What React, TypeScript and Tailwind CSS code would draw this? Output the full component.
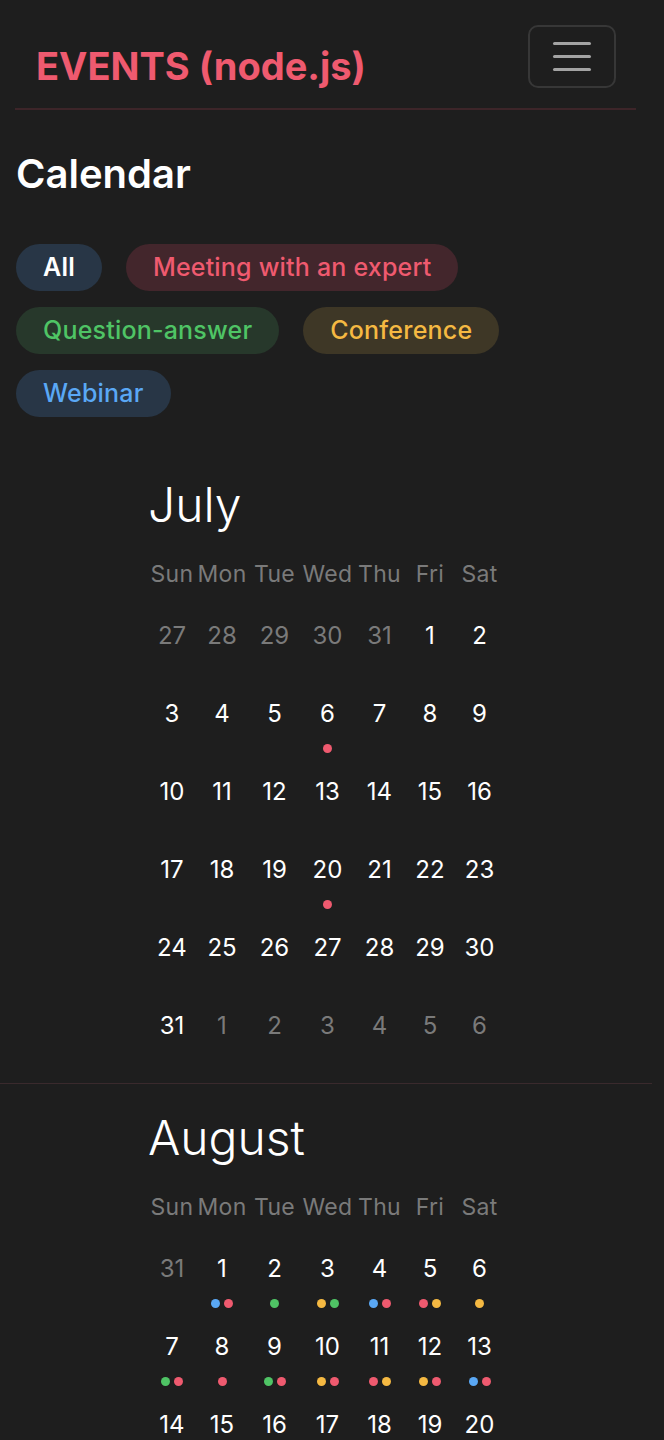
import React from "react";

type Dot = "r" | "g" | "y" | "b";
type Day = { n: number; muted?: boolean; dots?: Dot[] };

const dotColor: Record<Dot, string> = {
  r: "bg-[#ef5a6f]",
  g: "bg-[#4fc465]",
  y: "bg-[#f5b942]",
  b: "bg-[#5aa8f5]",
};

const weekdays = ["Sun", "Mon", "Tue", "Wed", "Thu", "Fri", "Sat"];

const filters = [
  { label: "All", cls: "bg-[#283646] text-white font-semibold" },
  { label: "Meeting with an expert", cls: "bg-[#43262c] text-[#ef5a6f]" },
  { label: "Question-answer", cls: "bg-[#27382b] text-[#4fc465]" },
  { label: "Conference", cls: "bg-[#3e3726] text-[#f5b942]" },
  { label: "Webinar", cls: "bg-[#283646] text-[#5aa8f5]" },
];

const july: Day[] = [
  { n: 27, muted: true }, { n: 28, muted: true }, { n: 29, muted: true }, { n: 30, muted: true }, { n: 31, muted: true }, { n: 1 }, { n: 2 },
  { n: 3 }, { n: 4 }, { n: 5 }, { n: 6, dots: ["r"] }, { n: 7 }, { n: 8 }, { n: 9 },
  { n: 10 }, { n: 11 }, { n: 12 }, { n: 13 }, { n: 14 }, { n: 15 }, { n: 16 },
  { n: 17 }, { n: 18 }, { n: 19 }, { n: 20, dots: ["r"] }, { n: 21 }, { n: 22 }, { n: 23 },
  { n: 24 }, { n: 25 }, { n: 26 }, { n: 27 }, { n: 28 }, { n: 29 }, { n: 30 },
  { n: 31 }, { n: 1, muted: true }, { n: 2, muted: true }, { n: 3, muted: true }, { n: 4, muted: true }, { n: 5, muted: true }, { n: 6, muted: true },
];

const august: Day[] = [
  { n: 31, muted: true }, { n: 1, dots: ["b", "r"] }, { n: 2, dots: ["g"] }, { n: 3, dots: ["y", "g"] }, { n: 4, dots: ["b", "r"] }, { n: 5, dots: ["r", "y"] }, { n: 6, dots: ["y"] },
  { n: 7, dots: ["g", "r"] }, { n: 8, dots: ["r"] }, { n: 9, dots: ["g", "r"] }, { n: 10, dots: ["y", "r"] }, { n: 11, dots: ["r", "y"] }, { n: 12, dots: ["y", "r"] }, { n: 13, dots: ["b", "r"] },
  { n: 14, dots: ["r"] }, { n: 15, dots: ["g"] }, { n: 16, dots: ["y", "r"] }, { n: 17, dots: ["b"] }, { n: 18, dots: ["r", "g"] }, { n: 19, dots: ["y"] }, { n: 20, dots: ["r"] },
  { n: 21 }, { n: 22, dots: ["r"] }, { n: 23, dots: ["g"] }, { n: 24 }, { n: 25, dots: ["y"] }, { n: 26, dots: ["b", "r"] }, { n: 27 },
  { n: 28 }, { n: 29, dots: ["r"] }, { n: 30 }, { n: 31, dots: ["g"] }, { n: 1, muted: true }, { n: 2, muted: true }, { n: 3, muted: true },
];

function Month({ name, days }: { name: string; days: Day[] }) {
  return (
    <section className="border-b border-[#3a2a2d] w-[652px] pt-[25px]">
      <div className="ml-[148px]">
        <h2 className="text-[48px] leading-[58px] font-light text-white">{name}</h2>
        <div className="mt-[25px] grid grid-cols-[48px_52px_53px_53px_51px_50px_49px]">
          {weekdays.map((w) => (
            <div key={w} className="text-center text-[23px] leading-[30px] tracking-[0.3px] text-[#7a7a7a]">
              {w}
            </div>
          ))}
        </div>
        <div className="mt-[32px] grid grid-cols-[48px_52px_53px_53px_51px_50px_49px] gap-y-[6px]">
          {days.map((d, i) => (
            <div key={i} className="flex h-[72px] flex-col items-center">
              <span className={`text-[24px] leading-[30px] ${d.muted ? "text-[#7a7a7a]" : "text-white"}`}>{d.n}</span>
              {d.dots && (
                <div className="mt-[15px] flex gap-[4px]">
                  {d.dots.map((c, j) => (
                    <span key={j} className={`h-[9px] w-[9px] rounded-full ${dotColor[c]}`} />
                  ))}
                </div>
              )}
            </div>
          ))}
        </div>
      </div>
    </section>
  );
}

export default function App() {
  return (
    <div className="min-h-screen bg-[#1e1e1e] font-['Inter',sans-serif]">
      <nav className="ml-[15px] mr-[28px] flex items-start justify-between border-b-2 border-[#3d2529] pt-[25px] pb-[19px] pl-[21px] pr-[20px]">
        <span className="mt-[18px] text-[38px] font-bold leading-[46px] text-[#ef5a6f]">EVENTS (node.js)</span>
        <button className="flex h-[63px] w-[88px] flex-col items-center justify-center gap-[10px] rounded-[10px] border-2 border-[#373737]">
          <span className="h-[3px] w-[38px] rounded bg-[#a3a3a3]" />
          <span className="h-[3px] w-[38px] rounded bg-[#a3a3a3]" />
          <span className="h-[3px] w-[38px] rounded bg-[#a3a3a3]" />
        </button>
      </nav>

      <div className="px-4">
        <h1 className="mt-[40px] text-[40px] font-semibold leading-[48px] text-white">Calendar</h1>
        <div className="mt-[46px] mb-[34px] flex flex-wrap gap-x-6 gap-y-4">
          {filters.map((f) => (
            <button key={f.label} className={`flex h-[47px] items-center rounded-full px-[27px] text-[25px] font-medium tracking-[0.2px] ${f.cls}`}>
              {f.label}
            </button>
          ))}
        </div>
      </div>

      <Month name="July" days={july} />
      <Month name="August" days={august} />
    </div>
  );
}
